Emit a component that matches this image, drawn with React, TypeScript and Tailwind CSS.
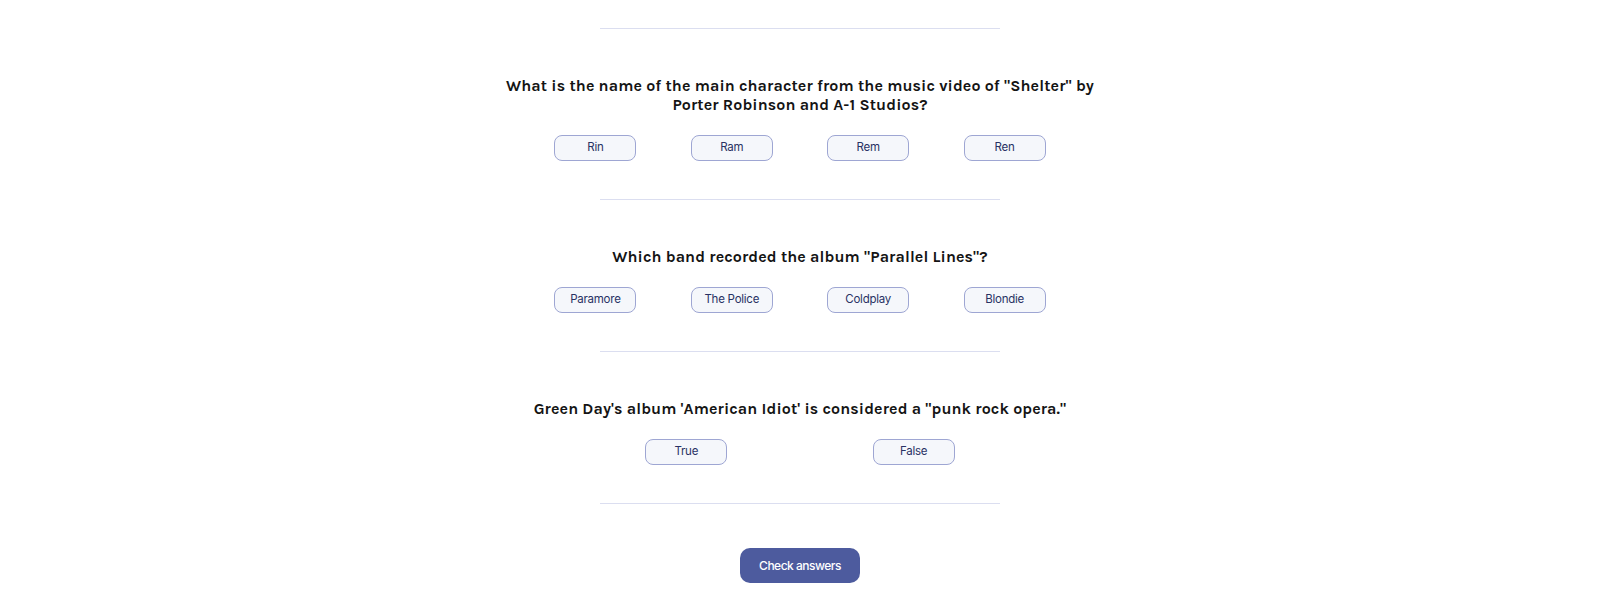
const questions = [
  {
    question: 'What is the name of the main character from the music video of "Shelter" by Porter Robinson and A-1 Studios?',
    answers: ['Rin', 'Ram', 'Rem', 'Ren'],
  },
  {
    question: 'Which band recorded the album "Parallel Lines"?',
    answers: ['Paramore', 'The Police', 'Coldplay', 'Blondie'],
  },
  {
    question: 'Green Day\'s album \'American Idiot\' is considered a "punk rock opera."',
    answers: ['True', 'False'],
  },
];

const Divider = () => <div className="w-[400px] h-px bg-[#dbdef0]"></div>;

const App = () => {
  return (
    <div className="flex flex-col items-center min-h-screen bg-white font-['Inter',sans-serif]">
      <div className="mt-[28px]">
        <Divider />
      </div>
      {questions.map((q) => (
        <div key={q.question} className="flex flex-col items-center w-[600px]">
          <h2 className="pt-[47px] text-center text-[16px] leading-[19px] font-bold text-[#141414] tracking-[0.1px] font-['Karla','Lato',sans-serif]">
            {q.question}
          </h2>
          <div className="mt-[21px] mb-[38px] flex w-full justify-evenly">
            {q.answers.map((a) => (
              <button
                key={a}
                className="w-[82px] h-[26px] rounded-[8px] border border-[#9ea6d3] bg-[#f5f7fb] text-[11.5px] tracking-[-0.25px] text-[#293264]"
              >
                {a}
              </button>
            ))}
          </div>
          <Divider />
        </div>
      ))}
      <button className="mt-[44px] w-[120px] h-[35px] rounded-[10px] bg-[#4d5b9e] text-white text-[12px] tracking-[-0.5px] font-medium">
        Check answers
      </button>
    </div>
  );
};

export default App;
